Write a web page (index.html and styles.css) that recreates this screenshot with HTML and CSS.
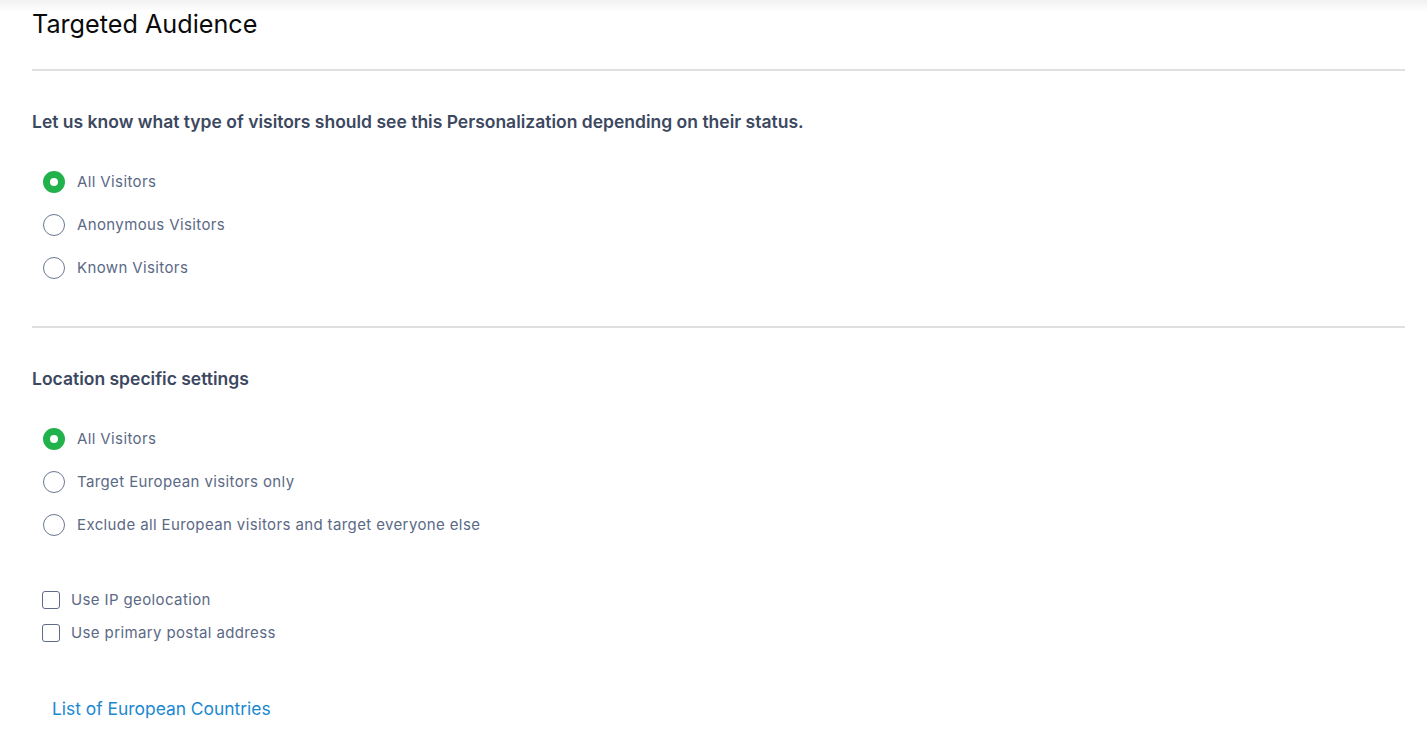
FILE: index.html
```html
<!DOCTYPE html>
<html lang="en">
<head>
<meta charset="utf-8">
<title>Targeted Audience</title>
<link rel="stylesheet" href="styles.css">
</head>
<body>
<div class="topshade"></div>
<main class="page">
  <h1 class="title">Targeted Audience</h1>
  <hr class="divider divider-first">

  <section class="section">
    <h2 class="subhead">Let us know what type of visitors should see this Personalization depending on their status.</h2>
    <ul class="radio-list">
      <li class="radio-row"><span class="radio checked"></span><span class="label">All Visitors</span></li>
      <li class="radio-row"><span class="radio"></span><span class="label">Anonymous Visitors</span></li>
      <li class="radio-row"><span class="radio"></span><span class="label">Known Visitors</span></li>
    </ul>
  </section>

  <hr class="divider divider-second">

  <section class="section">
    <h2 class="subhead subhead-loc">Location specific settings</h2>
    <ul class="radio-list">
      <li class="radio-row"><span class="radio checked"></span><span class="label">All Visitors</span></li>
      <li class="radio-row"><span class="radio"></span><span class="label">Target European visitors only</span></li>
      <li class="radio-row"><span class="radio"></span><span class="label">Exclude all European visitors and target everyone else</span></li>
    </ul>
    <ul class="check-list">
      <li class="check-row"><span class="checkbox"></span><span class="label">Use IP geolocation</span></li>
      <li class="check-row"><span class="checkbox"></span><span class="label">Use primary postal address</span></li>
    </ul>
    <a class="link" href="#">List of European Countries</a>
  </section>
</main>
</body>
</html>
```

FILE: styles.css
```css
html, body {
  margin: 0;
  padding: 0;
  background: #ffffff;
  font-family: "Inter", "Noto Sans", "Liberation Sans", sans-serif;
}

.topshade {
  position: absolute;
  left: 0;
  top: 0;
  right: 0;
  height: 12px;
  background: linear-gradient(to bottom, #f1f1f1, rgba(255,255,255,0));
  pointer-events: none;
}

.page {
  padding: 0 22px 0 32px;
}

.title {
  margin: 0;
  padding-top: 10px;
  font-size: 25.2px;
  line-height: 29px;
  font-weight: 400;
  color: #0b0b0b;
}

.divider {
  border: 0;
  height: 2px;
  background: #e0e0e0;
  margin: 0;
}

.divider-first {
  margin-top: 30px;
}

.divider-second {
  margin-top: 37px;
}

.subhead {
  margin: 41px 0 0 0;
  font-size: 17.5px;
  line-height: 20px;
  font-weight: 600;
  color: #3c485f;
}

.subhead-loc {
  margin-top: 41px;
}

.radio-list,
.check-list {
  list-style: none;
  margin: 0;
  padding: 0;
}

.radio-list {
  margin-top: 28px;
  padding-left: 11px;
}

.radio-row {
  display: flex;
  align-items: center;
  height: 43px;
}

.radio {
  box-sizing: border-box;
  width: 22px;
  height: 22px;
  border-radius: 50%;
  border: 1.5px solid #6a7891;
  background: #fff;
  flex: none;
  margin-right: 12px;
}

.radio.checked {
  border: 7.5px solid #22b24c;
  background: #fff;
}

.label {
  font-size: 15px;
  line-height: 20px;
  color: #5b6985;
  letter-spacing: 0.38px;
}

.check-list {
  margin-top: 37px;
  padding-left: 10px;
}

.check-row {
  display: flex;
  align-items: center;
  height: 33px;
}

.checkbox {
  box-sizing: border-box;
  width: 18px;
  height: 18px;
  border: 1.5px solid #5d6b85;
  border-radius: 3px;
  background: #fff;
  flex: none;
  margin-right: 11px;
}

.link {
  display: inline-block;
  margin-top: 49px;
  margin-left: 20px;
  font-size: 17.4px;
  line-height: 22px;
  color: #1b88d1;
  text-decoration: none;
}
```
